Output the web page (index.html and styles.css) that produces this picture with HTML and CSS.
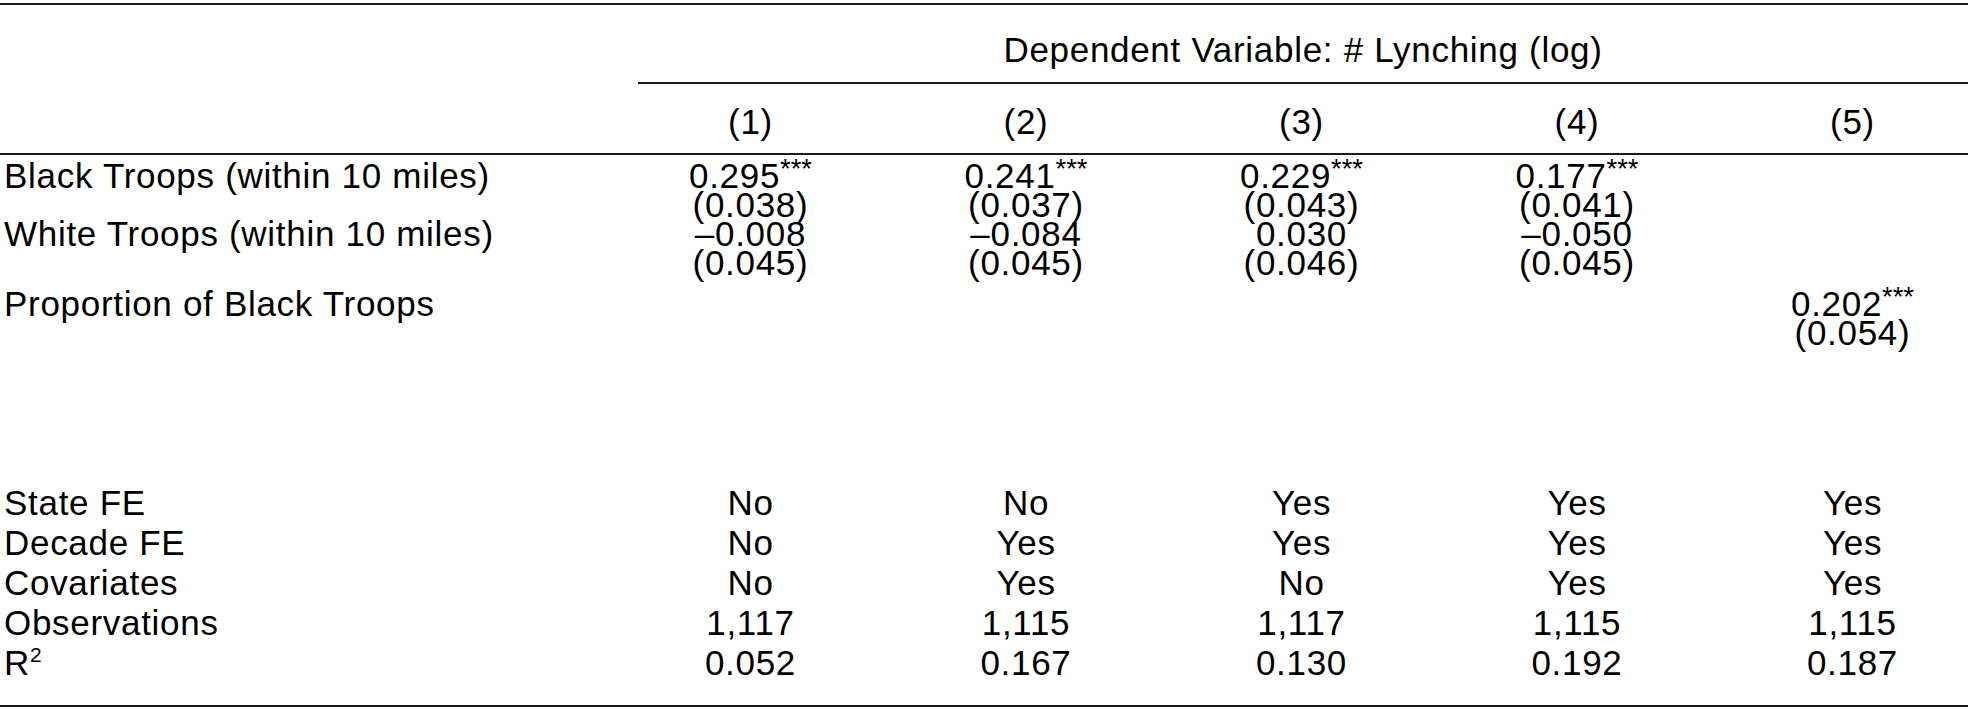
FILE: index.html
```html
<!DOCTYPE html>
<html lang="en">
<head>
<meta charset="utf-8">
<title>Regression table</title>
<link rel="stylesheet" href="styles.css">
</head>
<body>
<div class="table">
  <div class="rule rule-top"></div>

  <div class="row head1">
    <div class="label"></div>
    <div class="span">Dependent Variable: # Lynching (log)</div>
  </div>

  <div class="row head2">
    <div class="label"></div>
    <div class="c">(1)</div>
    <div class="c">(2)</div>
    <div class="c">(3)</div>
    <div class="c">(4)</div>
    <div class="c last">(5)</div>
  </div>

  <div class="rule rule-mid"></div>

  <div class="coef">
    <div class="row tight">
      <div class="label">Black Troops (within 10 miles)</div>
      <div class="c">0.295<sup>***</sup></div>
      <div class="c">0.241<sup>***</sup></div>
      <div class="c">0.229<sup>***</sup></div>
      <div class="c">0.177<sup>***</sup></div>
      <div class="c last"></div>
    </div>
    <div class="row tight">
      <div class="label"></div>
      <div class="c">(0.038)</div>
      <div class="c">(0.037)</div>
      <div class="c">(0.043)</div>
      <div class="c">(0.041)</div>
      <div class="c last"></div>
    </div>
    <div class="row tight">
      <div class="label">White Troops (within 10 miles)</div>
      <div class="c">–0.008</div>
      <div class="c">–0.084</div>
      <div class="c">0.030</div>
      <div class="c">–0.050</div>
      <div class="c last"></div>
    </div>
    <div class="row tight">
      <div class="label"></div>
      <div class="c">(0.045)</div>
      <div class="c">(0.045)</div>
      <div class="c">(0.046)</div>
      <div class="c">(0.045)</div>
      <div class="c last"></div>
    </div>
    <div class="row tight gap-before">
      <div class="label">Proportion of Black Troops</div>
      <div class="c"></div>
      <div class="c"></div>
      <div class="c"></div>
      <div class="c"></div>
      <div class="c last">0.202<sup>***</sup></div>
    </div>
    <div class="row tight">
      <div class="label"></div>
      <div class="c"></div>
      <div class="c"></div>
      <div class="c"></div>
      <div class="c"></div>
      <div class="c last">(0.054)</div>
    </div>
  </div>

  <div class="stats">
    <div class="row loose">
      <div class="label">State FE</div>
      <div class="c">No</div>
      <div class="c">No</div>
      <div class="c">Yes</div>
      <div class="c">Yes</div>
      <div class="c last">Yes</div>
    </div>
    <div class="row loose">
      <div class="label">Decade FE</div>
      <div class="c">No</div>
      <div class="c">Yes</div>
      <div class="c">Yes</div>
      <div class="c">Yes</div>
      <div class="c last">Yes</div>
    </div>
    <div class="row loose">
      <div class="label">Covariates</div>
      <div class="c">No</div>
      <div class="c">Yes</div>
      <div class="c">No</div>
      <div class="c">Yes</div>
      <div class="c last">Yes</div>
    </div>
    <div class="row loose">
      <div class="label">Observations</div>
      <div class="c">1,117</div>
      <div class="c">1,115</div>
      <div class="c">1,117</div>
      <div class="c">1,115</div>
      <div class="c last">1,115</div>
    </div>
    <div class="row loose">
      <div class="label">R<sup class="sq">2</sup></div>
      <div class="c">0.052</div>
      <div class="c">0.167</div>
      <div class="c">0.130</div>
      <div class="c">0.192</div>
      <div class="c last">0.187</div>
    </div>
  </div>

  <div class="rule rule-bottom"></div>
</div>
</body>
</html>
```

FILE: styles.css
```css
html, body {
  margin: 0;
  padding: 0;
  background: #ffffff;
}

body {
  font-family: "Liberation Sans", Arial, Helvetica, sans-serif;
  font-size: 35px;
  letter-spacing: 0.7px;
  color: #000000;
}

.table {
  width: 1968px;
  padding-top: 3px;
}

.rule {
  height: 0;
  border-top: 2px solid #1a1a1a;
}

.row {
  display: grid;
  grid-template-columns: 613px 275px 276px 275px 276px 253px;
  align-items: center;
}

.label {
  padding-left: 4px;
  white-space: nowrap;
}

.c {
  text-align: center;
  white-space: nowrap;
}

.c.last {
  padding-left: 22px;
}

.head1 {
  line-height: 40px;
}

.head1 .span {
  grid-column: 2 / 7;
  margin-left: 25px;
  text-align: center;
  padding-top: 25px;
  padding-bottom: 12px;
  border-bottom: 2px solid #1a1a1a;
}

.head2 {
  line-height: 40px;
  padding-top: 18px;
  padding-bottom: 11px;
}

.coef {
  padding-top: 6px;
}

.tight {
  line-height: 29px;
  height: 29px;
}

.gap-before {
  margin-top: 12px;
}

.stats {
  padding-top: 136px;
  padding-bottom: 22px;
}

.loose {
  line-height: 40px;
  height: 40px;
}

sup {
  font-size: 0.78em;
  line-height: 0;
  vertical-align: 0.38em;
  letter-spacing: 0;
}

sup.sq {
  font-size: 0.6em;
  vertical-align: 0.6em;
}
```
